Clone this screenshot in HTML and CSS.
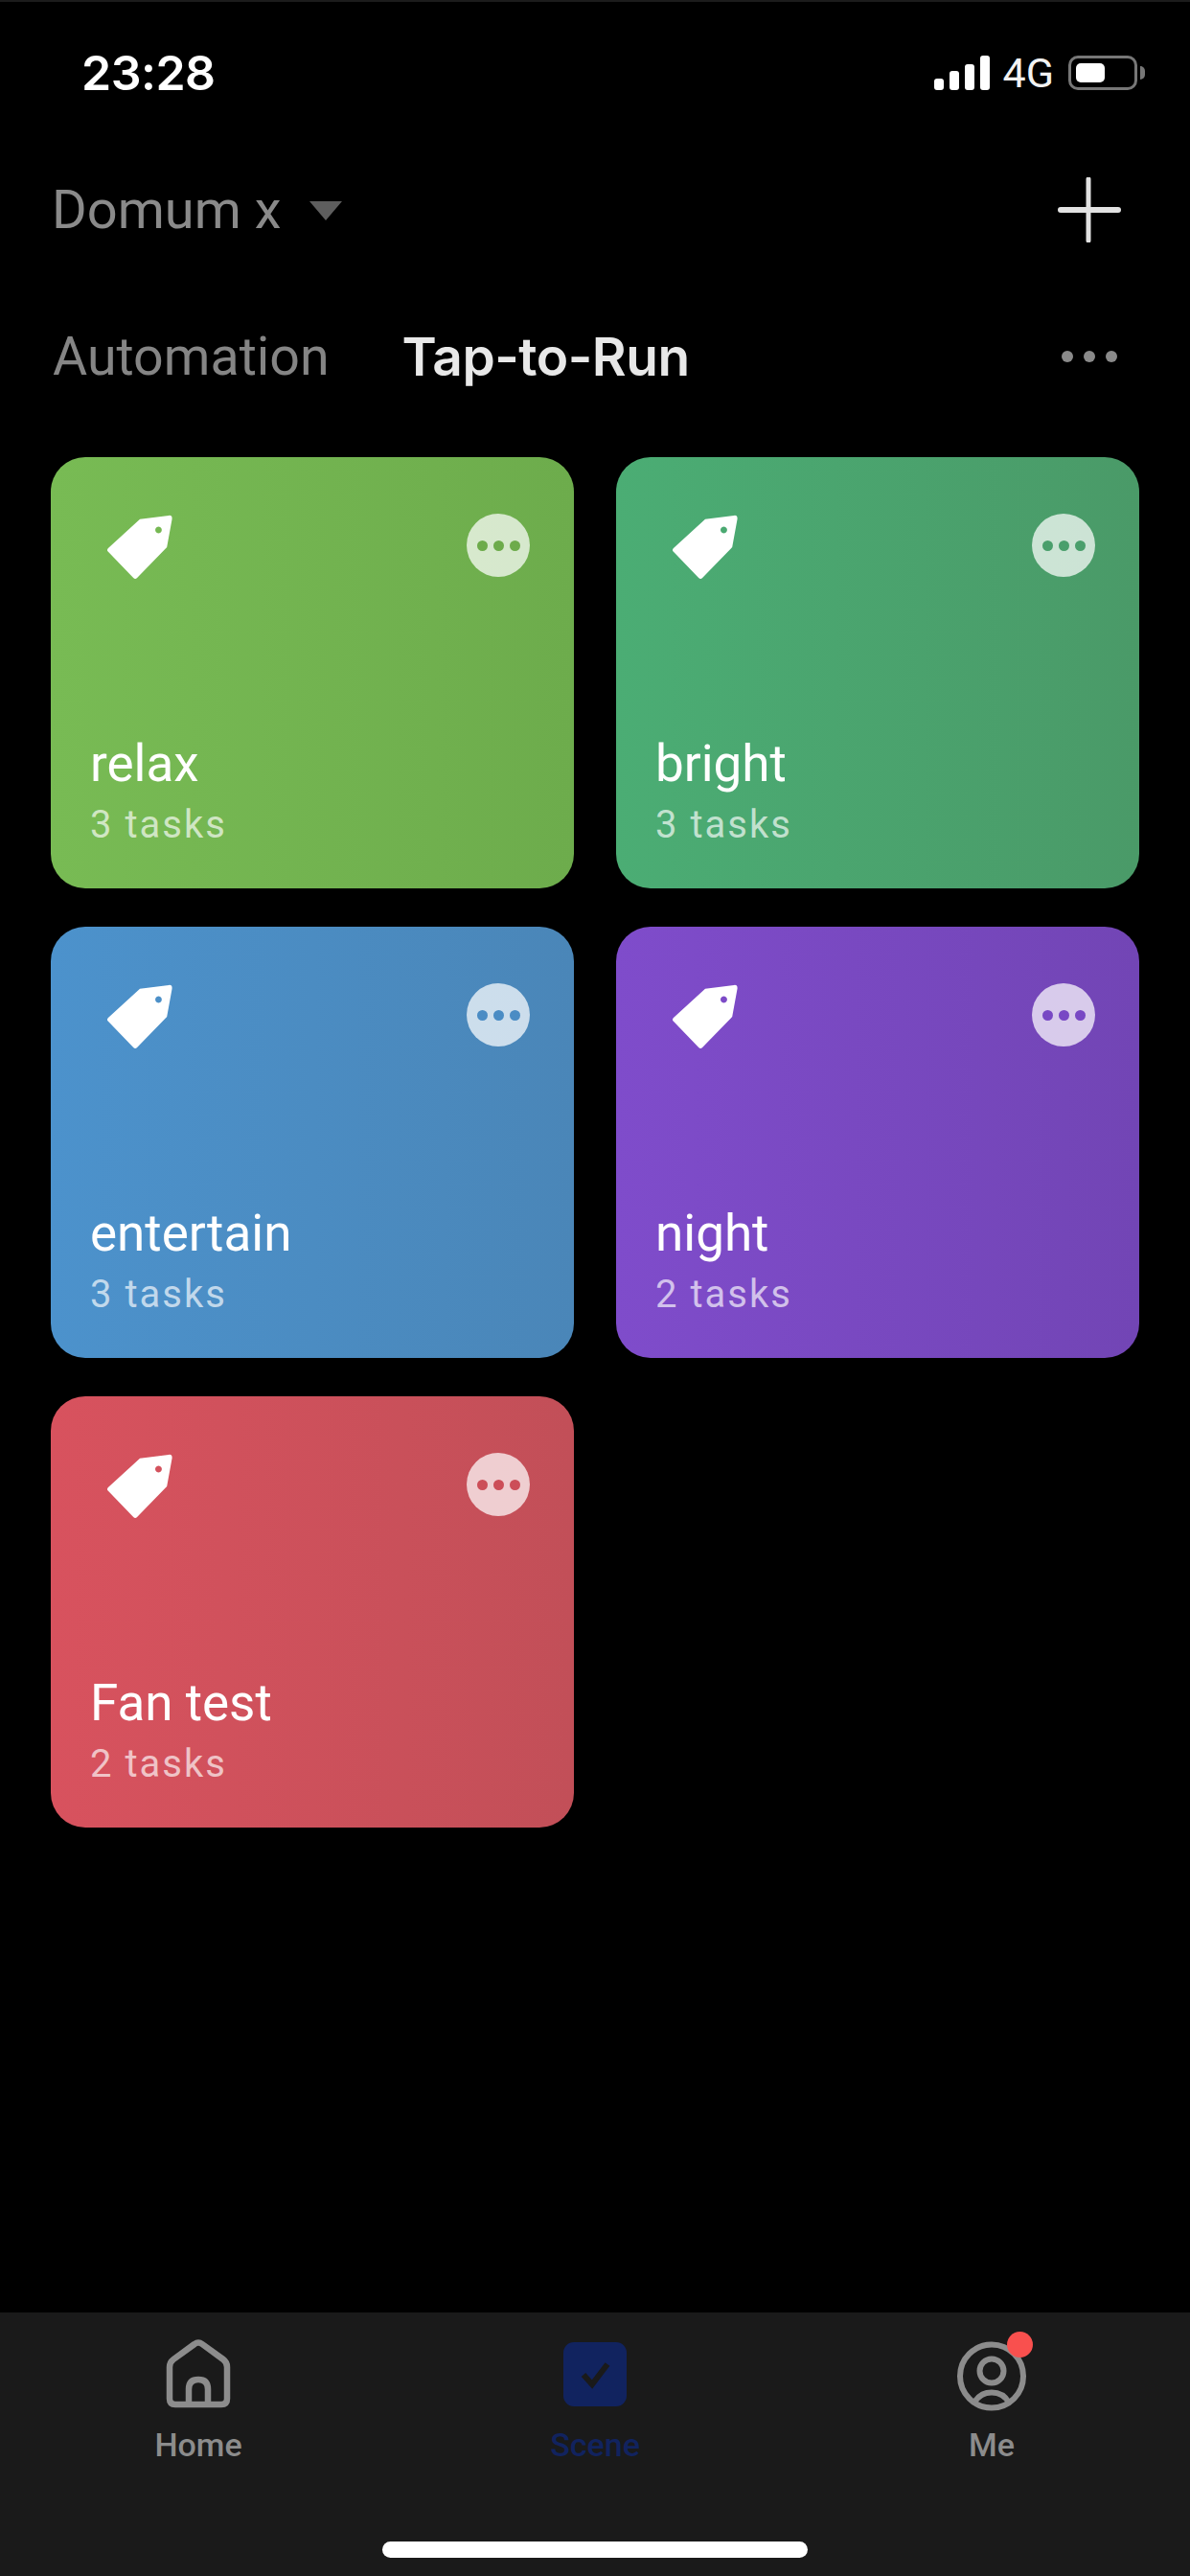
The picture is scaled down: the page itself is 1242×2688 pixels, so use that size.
FILE: index.html
```html
<!DOCTYPE html>
<html lang="en">
<head>
    <meta charset="UTF-8">
    <meta name="viewport" content="width=device-width, initial-scale=1.0">
    <title>Scene</title>
    <link rel="stylesheet" href="styles.css">
</head>
<body>
    <div class="page">
        <div class="status-bar">
            <span class="time">23:28</span>
            <div class="status-icons">
                <div class="signal">
                    <span class="bar bar-1"></span>
                    <span class="bar bar-2"></span>
                    <span class="bar bar-3"></span>
                    <span class="bar bar-4"></span>
                </div>
                <span class="network">4G</span>
                <div class="battery"><span class="battery-level"></span></div>
                <span class="battery-nub"></span>
            </div>
        </div>

        <div class="home-row">
            <div class="home-name">
                <span>Domum x</span>
                <span class="caret"></span>
            </div>
            <svg class="plus" width="68" height="68" viewBox="0 0 68 68">
                <path d="M34 2V66" stroke="#e2e2e2" stroke-width="5" stroke-linecap="round" fill="none"/>
                <path d="M5 34H65" stroke="#e2e2e2" stroke-width="6" stroke-linecap="round" fill="none"/>
            </svg>
        </div>

        <div class="tabs">
            <span class="tab">Automation</span>
            <span class="tab tab-active">Tap-to-Run</span>
            <div class="tabs-more"><i></i><i></i><i></i></div>
        </div>

        <div class="scene-grid">
            <div class="scene-card green">
                <div class="card-top">
                    <svg class="tag" width="70" height="72" viewBox="0 0 72 72"><path class="tag-shape" fill-rule="evenodd" d="M36 7 L67 3 Q71 2.500 70.500 7 L65 37 L33 70 Q31 72 29 70 L2 42 Q0 40 2 38 Z M56 15 a3.500 3.500 0 1 0 0.010 0 Z"/></svg>
                    <div class="more"><i></i><i></i><i></i></div>
                </div>
                <div class="card-name">relax</div>
                <div class="card-tasks">3 tasks</div>
            </div>
            <div class="scene-card teal">
                <div class="card-top">
                    <svg class="tag" width="70" height="72" viewBox="0 0 72 72"><path class="tag-shape" fill-rule="evenodd" d="M36 7 L67 3 Q71 2.500 70.500 7 L65 37 L33 70 Q31 72 29 70 L2 42 Q0 40 2 38 Z M56 15 a3.500 3.500 0 1 0 0.010 0 Z"/></svg>
                    <div class="more"><i></i><i></i><i></i></div>
                </div>
                <div class="card-name">bright</div>
                <div class="card-tasks">3 tasks</div>
            </div>
            <div class="scene-card blue">
                <div class="card-top">
                    <svg class="tag" width="70" height="72" viewBox="0 0 72 72"><path class="tag-shape" fill-rule="evenodd" d="M36 7 L67 3 Q71 2.500 70.500 7 L65 37 L33 70 Q31 72 29 70 L2 42 Q0 40 2 38 Z M56 15 a3.500 3.500 0 1 0 0.010 0 Z"/></svg>
                    <div class="more"><i></i><i></i><i></i></div>
                </div>
                <div class="card-name">entertain</div>
                <div class="card-tasks">3 tasks</div>
            </div>
            <div class="scene-card purple">
                <div class="card-top">
                    <svg class="tag" width="70" height="72" viewBox="0 0 72 72"><path class="tag-shape" fill-rule="evenodd" d="M36 7 L67 3 Q71 2.500 70.500 7 L65 37 L33 70 Q31 72 29 70 L2 42 Q0 40 2 38 Z M56 15 a3.500 3.500 0 1 0 0.010 0 Z"/></svg>
                    <div class="more"><i></i><i></i><i></i></div>
                </div>
                <div class="card-name">night</div>
                <div class="card-tasks">2 tasks</div>
            </div>
            <div class="scene-card red">
                <div class="card-top">
                    <svg class="tag" width="70" height="72" viewBox="0 0 72 72"><path class="tag-shape" fill-rule="evenodd" d="M36 7 L67 3 Q71 2.500 70.500 7 L65 37 L33 70 Q31 72 29 70 L2 42 Q0 40 2 38 Z M56 15 a3.500 3.500 0 1 0 0.010 0 Z"/></svg>
                    <div class="more"><i></i><i></i><i></i></div>
                </div>
                <div class="card-name">Fan test</div>
                <div class="card-tasks">2 tasks</div>
            </div>
        </div>

        <div class="tab-bar">
            <div class="nav-items">
                <div class="nav-item">
                    <svg width="72" height="76" viewBox="0 0 72 76" fill="none" stroke="#8c8c8c" stroke-width="6.500" stroke-linejoin="round">
                        <path d="M32 5 Q36 2 40 5 L62 21 Q66 24 66 29 V62 Q66 68 60 68 H12 Q6 68 6 62 V29 Q6 24 10 21 Z"/>
                        <path d="M26 68 V52 Q26 42 36 42 Q46 42 46 52 V68"/>
                    </svg>
                    <span>Home</span>
                </div>
                <div class="nav-item nav-active">
                    <svg width="72" height="76" viewBox="0 0 72 76">
                        <rect x="3" y="3" width="66" height="67" rx="11" fill="#11235f"/>
                        <path d="M24 37 L33 47 L49 26" fill="none" stroke="#1a1a1a" stroke-width="6"/>
                    </svg>
                    <span>Scene</span>
                </div>
                <div class="nav-item">
                    <div class="me-icon">
                        <svg width="76" height="76" viewBox="0 0 76 76" fill="none" stroke="#8c8c8c" stroke-width="6">
                            <circle cx="38" cy="38.500" r="33"/>
                            <circle cx="38" cy="33" r="12.500"/>
                            <path d="M20 66 Q26 55.500 38 55.500 Q50 55.500 56 66"/>
                        </svg>
                        <span class="badge"></span>
                    </div>
                    <span>Me</span>
                </div>
            </div>
            <div class="home-indicator"></div>
        </div>
    </div>
</body>
</html>
```

FILE: styles.css
```css
* {
    box-sizing: border-box;
}

body {
    margin: 0;
    background-color: #000;
    font-family: Roboto, "Noto Sans", sans-serif;
}

.page {
    width: 1242px;
    height: 2688px;
    display: flex;
    flex-direction: column;
    overflow: hidden;
    border-top: 2px solid #1c1c1c;
}

/* status bar */
.status-bar {
    display: flex;
    justify-content: space-between;
    align-items: center;
    height: 72px;
    margin-top: 38px;
    padding: 0 47px 0 85px;
}

.time {
    font-family: Inter, sans-serif;
    font-size: 50px;
    font-weight: 600;
    color: #fff;
    letter-spacing: -0.500px;
}

.status-icons {
    display: flex;
    align-items: center;
}

.signal {
    display: flex;
    align-items: flex-end;
    gap: 6px;
    height: 36px;
}

.bar {
    width: 10px;
    background-color: #fff;
    border-radius: 3px;
}

.bar-1 { height: 12px; }
.bar-2 { height: 20px; }
.bar-3 { height: 27px; }
.bar-4 { height: 36px; }

.network {
    margin: 0 15px 0 14px;
    font-size: 43px;
    color: #f2f2f2;
}

.battery {
    width: 72px;
    height: 36px;
    padding: 5px;
    border: 3px solid #777;
    border-radius: 10px;
}

.battery-level {
    display: block;
    width: 30px;
    height: 100%;
    background-color: #fff;
    border-radius: 5px;
}

.battery-nub {
    width: 5px;
    height: 14px;
    margin-left: 3px;
    background-color: #777;
    border-radius: 0 7px 7px 0;
}

/* home name row */
.home-row {
    display: flex;
    justify-content: space-between;
    align-items: center;
    height: 68px;
    margin-top: 73px;
    padding: 0 72px 0 54px;
}

.home-name {
    display: flex;
    align-items: center;
    gap: 30px;
    font-size: 56px;
    color: #8a8a8a;
}

.caret {
    width: 0;
    height: 0;
    border-left: 17px solid transparent;
    border-right: 17px solid transparent;
    border-top: 20px solid #5e5e5e;
    margin-top: 2px;
}

/* tabs */
.tabs {
    display: flex;
    align-items: center;
    gap: 76px;
    height: 64px;
    margin-top: 87px;
    padding: 0 76px 0 55px;
}

.tab {
    font-size: 55.500px;
    color: #858585;
}

.tab-active {
    font-family: Inter, sans-serif;
    font-size: 55px;
    font-weight: 600;
    letter-spacing: -0.500px;
    color: #e8e8e8;
}

.tabs-more {
    display: flex;
    gap: 11px;
    margin-left: auto;
}

.tabs-more i {
    width: 12px;
    height: 12px;
    border-radius: 50%;
    background-color: #8a8a8a;
}

/* scene cards */
.scene-grid {
    display: grid;
    grid-template-columns: 546px 546px;
    grid-auto-rows: 450px;
    gap: 40px 44px;
    margin-top: 73px;
    padding-left: 53px;
}

.scene-card {
    display: flex;
    flex-direction: column;
    padding: 57px 46px 42px 41px;
    border-radius: 36px;
}

.green { background: linear-gradient(90deg, #78bb54, #6dac4c); }
.teal { background: linear-gradient(90deg, #4bad74, #4a9a68); }
.blue { background: linear-gradient(90deg, #4c92cc, #4a86b8); }
.purple { background: linear-gradient(90deg, #7f4ccb, #7245b5); }
.red { background: linear-gradient(90deg, #d8525e, #c24f58); }

.card-top {
    display: flex;
    justify-content: space-between;
    align-items: flex-start;
    padding-left: 17px;
}

.tag-shape {
    fill: #fff;
}

.more {
    display: flex;
    justify-content: center;
    align-items: center;
    gap: 6px;
    width: 66px;
    height: 66px;
    margin-top: 2px;
    border-radius: 50%;
    background-color: rgba(255, 255, 255, 0.72);
}

.more i {
    width: 11px;
    height: 11px;
    border-radius: 50%;
}

.green .more i { background-color: #6dab4b; }
.teal .more i { background-color: #4a9f6c; }
.blue .more i { background-color: #4a8cc4; }
.purple .more i { background-color: #7848c4; }
.red .more i { background-color: #cc4e58; }

.card-name {
    margin-top: auto;
    font-size: 53px;
    line-height: 60px;
    color: #fff;
}

.card-tasks {
    margin-top: 10px;
    font-size: 40px;
    line-height: 48px;
    letter-spacing: 2px;
    color: rgba(255, 255, 255, 0.66);
}

/* bottom tab bar */
.tab-bar {
    margin-top: auto;
    height: 275px;
    background-color: #1a1a1a;
    padding-top: 28px;
}

.nav-items {
    display: grid;
    grid-template-columns: repeat(3, 1fr);
}

.nav-item {
    display: flex;
    flex-direction: column;
    align-items: center;
    font-size: 34px;
    font-weight: 500;
    line-height: 40px;
    color: #8c8c8c;
}

.nav-item span {
    margin-top: 14px;
}

.nav-active {
    color: #11235f;
}

.me-icon {
    position: relative;
    height: 76px;
}

.me-icon .badge {
    position: absolute;
    top: -8px;
    right: -5px;
    width: 27px;
    height: 27px;
    margin: 0;
    border-radius: 50%;
    background-color: #f9504e;
}

.home-indicator {
    width: 444px;
    height: 17px;
    margin: 81px auto 0;
    border-radius: 9px;
    background-color: #fff;
}
```
